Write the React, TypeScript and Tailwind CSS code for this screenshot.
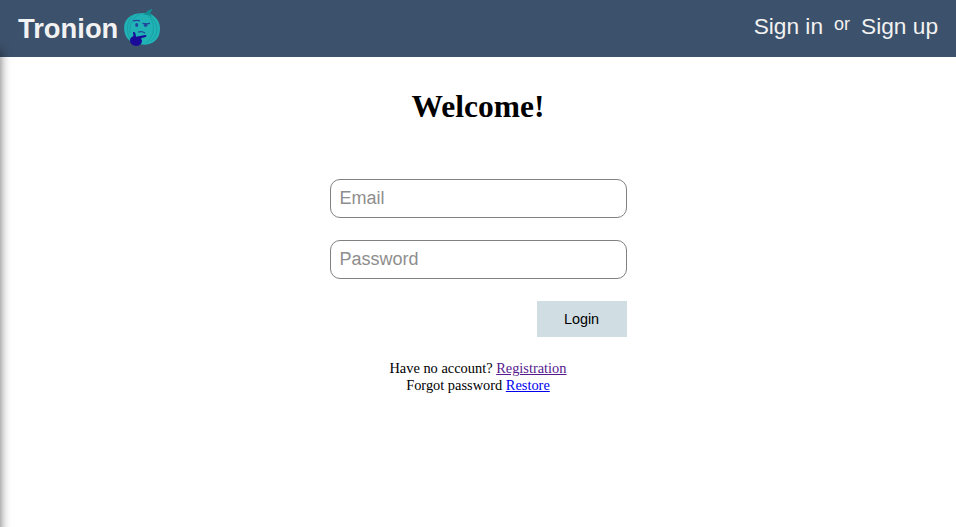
function PumpkinLogo() {
  return (
    <svg className="ml-1.5 mt-[9px] h-[37px] w-9 shrink-0" viewBox="0 0 36 37" aria-hidden="true">
      <path
        d="M18 4.3C22 3.3 27 4.3 30 7.2C34 10 36 14.5 36 19.5C36 25 34.5 29 31 32C27 35.5 22 36 18 35.5C12 36 6 33 3 29C0 25 -.5 18 .8 14C3 8 10 3.5 18 4.3Z"
        fill="#20b2b5"
      />
      <g fill="none" stroke="#138f97" strokeWidth=".7" opacity=".7">
        <path d="M10 5.5C3 10 1 23 7 31" />
        <path d="M16 5C8 8 5 17 6 25" />
        <path d="M22 5C32 11 32 26 22 34" />
        <path d="M26 7C35 14 35 25 27 32" />
      </g>
      <path d="M18.5 5.5C22 4.5 22.5 1.5 27.5 0L28.3 1.2C26 3 26 4.5 28 7.8Q24 5.2 18.5 5.5Z" fill="#128f96" />
      <g fill="none" stroke="#22469d" strokeWidth="1.3">
        <path d="M9 12.2Q12 10.7 16 11.8" />
        <path d="M18.5 14.3L22 15L26 14.3" />
        <path d="M14 23.2Q18 21.5 21 24.2" />
      </g>
      <ellipse cx="12.7" cy="16" rx="1.5" ry="2" fill="#22469d" />
      <ellipse cx="21.6" cy="16.2" rx="1.7" ry="1.6" fill="#22469d" />
      <path
        d="M9 23.3C10.5 22.5 11.5 23.5 11.7 26L12 27.8L21 26C23 26 23 27.4 21.5 28L17 29.3L18 31.5C18 35 15.5 37 12 36.8C8 36.8 6 34 6 31C6 29 7.5 28 9.5 27Z"
        fill="#190b98"
      />
    </svg>
  );
}

function Header() {
  return (
    <header className="flex h-[57px] items-start justify-between bg-[#3c516b] px-[18px] font-['Liberation_Sans',sans-serif] text-[#f2f2f2]">
      <div className="flex items-start">
        <span className="mt-[13px] text-[27.36px] leading-[31px] font-bold">Tronion</span>
        <PumpkinLogo />
      </div>
      <nav className="flex items-start">
        <a href="#signin" className="mt-[14px] text-[22.7px] leading-[25px]">Sign in</a>
        <span className="mx-[11px] mt-[14px] text-[18px] leading-[20px]">or</span>
        <a href="#signup" className="mt-[14px] text-[22.7px] leading-[25px]">Sign up</a>
      </nav>
    </header>
  );
}

const inputClass =
  "h-[39px] w-full rounded-[10px] border border-[#808080] bg-white px-[9px] font-['Liberation_Sans',sans-serif] text-[18px] text-black outline-none placeholder:text-[#8e8e8e]";

export default function App() {
  return (
    <div className="relative h-screen overflow-hidden bg-white font-['Liberation_Serif',serif] text-black">
      <Header />
      <aside className="absolute top-[51px] -bottom-5 -left-[200px] w-[200px] shadow-[0_0_10px_rgba(0,0,0,0.6)]" />
      <main className="flex flex-col items-center">
        <h1 className="mt-[31px] text-[31.5px] leading-[37px] font-bold">Welcome!</h1>
        <form className="mt-[54px] flex w-[297px] flex-col gap-[22px]">
          <input type="email" placeholder="Email" className={inputClass} />
          <input type="password" placeholder="Password" className={inputClass} />
          <button
            type="button"
            className="h-9 w-[90px] self-end bg-[#d0dde3] pt-px font-['Liberation_Sans',sans-serif] text-[14.4px]"
          >
            Login
          </button>
        </form>
        <div className="mt-[23px] text-center text-[14.4px] leading-[17px]">
          <p>
            Have no account? <a href="#registration" className="text-[#551a8b] underline">Registration</a>
          </p>
          <p>
            Forgot password <a href="#restore" className="text-[#0000ee] underline">Restore</a>
          </p>
        </div>
      </main>
    </div>
  );
}
